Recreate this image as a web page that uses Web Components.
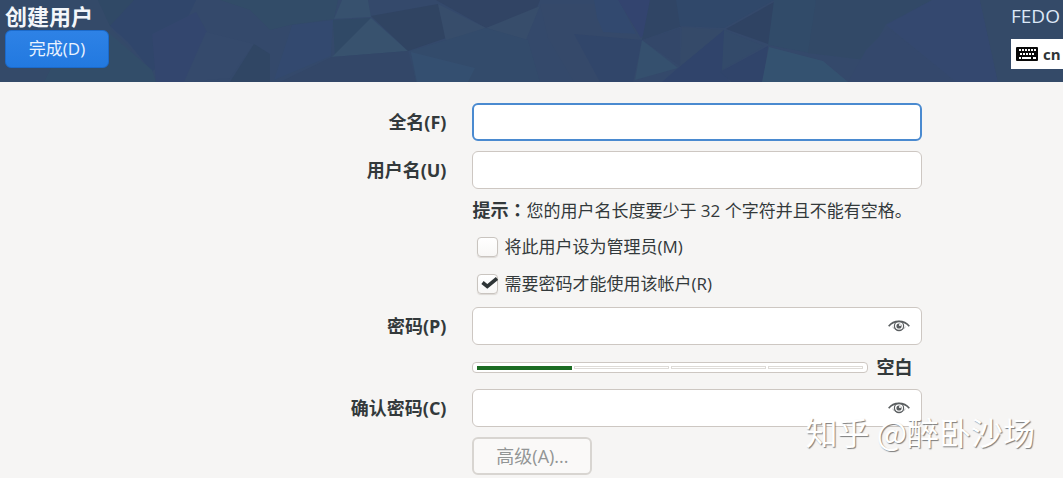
<!DOCTYPE html>
<html lang="zh-CN">
<head>
<meta charset="utf-8">
<title>创建用户</title>
<style>
html, body { margin: 0; }
body {
  min-height: 100vh; position: relative; overflow: hidden;
  background: #f6f5f4; color: #33393b;
  font: 17px/24px "Open Sans", "Noto Sans CJK SC", sans-serif;
}
</style>
</head>
<body>
<user-spoke></user-spoke>
<script>
const define = (name, html, setup) => {
  const template = document.createElement('template');
  template.innerHTML = html;
  customElements.define(name, class extends HTMLElement {
    constructor() {
      super();
      this.attachShadow({ mode: 'open' }).append(template.content.cloneNode(true));
    }
    connectedCallback() { if (setup) setup(this, this.shadowRoot); }
  });
};

define('poly-backdrop', `
<style>
:host { display: block; position: absolute; inset: 0; overflow: hidden; background: #34496b; }
svg { display: block; width: 100%; height: 100%; opacity: .8; }
</style>
<svg viewBox="0 0 1063 82" preserveAspectRatio="xMidYMid slice" aria-hidden="true">
  <path fill="#354b69" d="M0 0h98l14 30 20 20-32 32H0z"/>
  <path fill="#304965" d="M98 0h36l-8 14-16 12z"/>
  <path fill="#30466b" d="M134 0h62l-23 47-21 25-24-30-18-16z"/>
  <path fill="#324e69" d="M108 32l44 38 4 12H44l10-20z"/>
  <path fill="#33466f" d="M152 34l44-22 11 20-20 50h-31z"/>
  <path fill="#364b6d" d="M206 32l48 12-24 34-46 4z"/>
  <path fill="#304663" d="M254 44l16 10v28h-40z"/>
  <path fill="#324d68" d="M220 0h118l-4 19-44 6-20 5-20-20z"/>
  <path fill="#334a70" d="M292 25l41-5-2 36-57 24z"/>
  <path fill="#304a65" d="M333 20l38-2-36 37z"/>
  <path fill="#38536f" d="M342 0h26l3 17-37 2z"/>
  <path fill="#39556f" d="M371 18l37 33-76 6z"/>
  <path fill="#334768" d="M332 57l76-6 8 31H280z"/>
  <path fill="#304361" d="M371 16l67-12 8 34-38 13z"/>
  <path fill="#314363" d="M436 0h104l-4 10-50 18z"/>
  <path fill="#384e6b" d="M438 4l48 24-40 14z"/>
  <path fill="#384e6b" d="M486 28l54-22-14 34z"/>
  <path fill="#334c6b" d="M410 51l76-23 42 12 12 42H416z"/>
  <path fill="#355172" d="M411 52l64 16-7 14h-51z"/>
  <path fill="#36496a" d="M540 4h78l24 40-22 24-22 14h-24l-26-44z"/>
  <path fill="#324a70" d="M594 0h25l17 34-33-2-6-14z"/>
  <path fill="#334370" d="M618 0h32l-3 30-6 8z"/>
  <path fill="#31466a" d="M574 34l68 6-9 42h-33z"/>
  <path fill="#36526f" d="M642 40l36 28-43 12z"/>
  <path fill="#304564" d="M650 0h42l-10 26-40 14z"/>
  <path fill="#30486a" d="M676 0h98l-50 28-44-2z"/>
  <path fill="#364b69" d="M682 27l42 3-44 38z"/>
  <path fill="#334769" d="M642 40l38-12v38z"/>
  <path fill="#2f4262" d="M774 2l36 34-42 8-42-15z"/>
  <path fill="#334b6a" d="M724 30l40 16-44 25z"/>
  <path fill="#30446b" d="M678 68l46-38-2 40 8 12h-68z"/>
  <path fill="#30436a" d="M768 46l-48 26 12 10h31z"/>
  <path fill="#355572" d="M769 47l54 14 25 21h-86z"/>
  <path fill="#314c69" d="M774 0h42l-6 53-42-8z"/>
  <path fill="#324a67" d="M816 0h116l-46 24-20 36-58-7z"/>
  <path fill="#34486d" d="M866 50l22-22 70 54H848z"/>
  <path fill="#344870" d="M932 0h48l18 82h-42l-70-57z"/>
  <path fill="#354b68" d="M980 0h83v82h-65z"/>
</svg>`);

define('action-button', `
<style>
:host { display: block; width: max-content; }
button {
  box-sizing: border-box; height: 38px; min-width: 104px; padding: 0 20px; margin: 0;
  border: 1px solid #1b6acb; border-radius: 6px;
  background: linear-gradient(#2e82e6, #2279e0); color: #eaf3ff;
  font: inherit; line-height: 24px;
}
button:disabled {
  min-width: 120px; border: 2px solid #d8d5d1; background: #faf9f8; color: #929595; font-size: 18px;
}
</style>
<button type="button"><slot></slot></button>`, (host, root) => {
  root.querySelector('button').disabled = host.hasAttribute('disabled');
});

define('keyboard-layout', `
<style>
:host { display: flex; align-items: center; gap: 5px; box-sizing: border-box; height: 30px; padding: 0 5px; background: #fff; color: #2e3436; font-weight: 700; font-size: 15px; }
svg { width: 22px; height: 14px; flex: none; }
</style>
<svg viewBox="0 0 22 14" aria-hidden="true">
  <rect width="22" height="14" rx="1" fill="#080808"/>
  <g fill="#fff"><path d="M3 2h2v2H3zM6 2h2v2H6zM9 2h2v2H9zM12 2h2v2h-2zM15 2h2v2h-2zM18 2h2v2h-2zM4 6h2v2H4zM7 6h2v2H7zM10 6h2v2h-2zM13 6h2v2h-2zM16 6h2v2h-2zM3 10h2v2H3zM6 10h9v2H6zM17 10h3v2h-3z"/></g>
</svg>
<slot></slot>`);

define('spoke-header', `
<style>
:host { display: block; position: relative; }
.bar { position: relative; display: flex; justify-content: space-between; box-sizing: border-box; min-height: 82px; padding: 4px 0 0 5px; overflow: hidden; }
h1 { margin: 0 0 2px; font-size: 22px; line-height: 24px; font-weight: 700; color: #f3f6fa; }
.side { width: 52px; white-space: nowrap; color: #dce8f7; }
.product { line-height: 24px; font-size: 19px; margin-bottom: 11px; }
</style>
<poly-backdrop></poly-backdrop>
<div class="bar">
  <div><h1>创建用户</h1><action-button>完成(D)</action-button></div>
  <div class="side">
    <div class="product">FEDO</div>
    <keyboard-layout>cn</keyboard-layout>
  </div>
</div>`);

const rowStyle = `
:host { display: grid; grid-template-columns: 42% minmax(0, 450px); column-gap: 26px; align-items: center; }
.field { grid-column: 2; }`;

define('entry-row', `
<style>${rowStyle}
label { text-align: right; font-weight: 700; font-size: 18px; }
.field { position: relative; }
input { display: block; box-sizing: border-box; width: 100%; height: 38px; margin: 0; padding: 0 10px; border: 1px solid #cdc7c2; border-radius: 6px; background: #fff; color: inherit; font: inherit; outline: none; }
:host([active]) input { border: 2px solid #4a8ad0; }
:host([secret]) input { padding-right: 44px; }
button { display: none; position: absolute; right: 11px; top: 7px; width: 24px; height: 24px; padding: 0; border: 0; background: none; }
:host([secret]) button { display: grid; place-items: center; }
svg { width: 22px; height: 14px; }
</style>
<label for="entry"><slot></slot></label>
<div class="field">
  <input id="entry" type="text">
  <button type="button" aria-label="显示密码">
    <svg viewBox="0 0 22 14" fill="none" stroke="#5a5e60" aria-hidden="true">
      <path stroke-width="1.6" d="M.7 7.2C5.6.7 16.2.7 21.3 7.2"/>
      <path stroke-width=".5" d="M4.5 8C8 12 14 12 17.5 8"/>
      <circle cx="11" cy="7" r="4.6" stroke-width="1.2"/>
      <circle cx="11" cy="7" r="2.6" fill="#5a5e60" stroke="none"/>
      <circle cx="12" cy="6" r="1.1" fill="#fff" stroke="none"/>
    </svg>
  </button>
</div>`, (host, root) => {
  if (host.hasAttribute('secret')) root.querySelector('input').type = 'password';
});

define('field-row', `
<style>${rowStyle}</style>
<div class="field"><slot></slot></div>`);

define('hint-text', `
<style>
:host { display: block; white-space: nowrap; }
b { font-size: 18px; font-family: "Noto Sans CJK TC", sans-serif; line-height: 1; }
</style>
<b lang="zh-TW">提示：</b><slot></slot>`);

define('check-option', `
<style>
:host { display: block; padding-left: 5px; }
label { display: flex; align-items: center; gap: 6px; height: 27px; width: max-content; }
input { appearance: none; box-sizing: border-box; width: 21px; height: 20px; margin: 0; border: 1px solid #c9c4bf; border-radius: 4px; background: linear-gradient(#fff, #f8f7f6); box-shadow: 0 1px 1px #ddd9d5; }
.box { display: grid; }
.box > * { grid-area: 1 / 1; }
svg { width: 21px; height: 20px; visibility: hidden; pointer-events: none; }
input:checked + svg { visibility: visible; }
</style>
<label><span class="box"><input type="checkbox"><svg viewBox="0 0 21 20" fill="none" stroke="#2e3436" stroke-width="3.6" aria-hidden="true"><path d="M5.5 8.5l4.8 4L20 4.5"/></svg></span><span><slot></slot></span></label>`, (host, root) => {
  root.querySelector('input').checked = host.hasAttribute('checked');
});

define('strength-meter', `
<style>
:host { display: flex; align-items: center; gap: 8px; height: 24px; }
.track { flex: none; display: grid; grid-template-columns: repeat(4, 1fr); gap: 2px; box-sizing: border-box; width: 88%; height: 11px; padding: 3px 4px; border: 1px solid #cdc7c2; border-radius: 4px; background: #fff; }
i { box-sizing: border-box; height: 3px; border: 1px solid #dedbd7; }
i.on { height: 4px; border: 0; background: #1b6b22; }
b { font-size: 18px; }
</style>
<div class="track" role="meter" aria-label="密码强度" aria-valuemin="0" aria-valuemax="4" aria-valuenow="1"><i class="on"></i><i></i><i></i><i></i></div>
<b><slot></slot></b>`);

define('author-mark', `
<style>
:host { position: absolute; right: 28px; bottom: 24px; font-size: 32px; line-height: 46px; color: #fff; white-space: nowrap; text-shadow: 1px 1px 1px #7c7c7c; pointer-events: none; font-family: "Noto Sans CJK SC", sans-serif; }
</style>
<slot></slot>`);

define('user-spoke', `
<style>
:host { display: block; }
form { display: grid; gap: 10px; padding: 21px 0 3px; }
</style>
<spoke-header></spoke-header>
<form>
  <entry-row active>全名(F)</entry-row>
  <entry-row>用户名(U)</entry-row>
  <field-row><hint-text>您的用户名长度要少于 32 个字符并且不能有空格。</hint-text></field-row>
  <field-row><check-option>将此用户设为管理员(M)</check-option></field-row>
  <field-row><check-option checked>需要密码才能使用该帐户(R)</check-option></field-row>
  <entry-row secret>密码(P)</entry-row>
  <field-row><strength-meter>空白</strength-meter></field-row>
  <entry-row secret>确认密码(C)</entry-row>
  <field-row><action-button disabled>高级(A)...</action-button></field-row>
</form>
<author-mark>知乎 @醉卧沙场</author-mark>`);
</script>
</body>
</html>
